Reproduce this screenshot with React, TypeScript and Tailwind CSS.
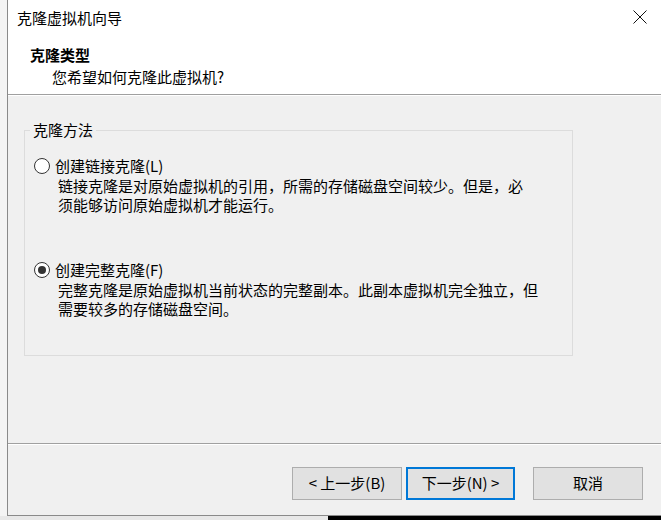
import React from 'react';

const font = { fontFamily: '"Noto Sans CJK SC", "Noto Sans", sans-serif' };

function Radio({ checked }: { checked: boolean }) {
  return (
    <span className="flex h-[16px] w-[16px] shrink-0 items-center justify-center rounded-full border border-[#333333] bg-white">
      {checked && <span className="h-[8px] w-[8px] rounded-full bg-[#333333]" />}
    </span>
  );
}

function Option({ label, lines, checked, className }: { label: string; lines: string[]; checked: boolean; className?: string }) {
  return (
    <div className={className}>
      <div className="flex items-center gap-[5px] pl-[9px] leading-[20px]">
        <Radio checked={checked} />
        <span>{label}</span>
      </div>
      <div className="pl-[33px] leading-[19px]">
        {lines.map((l) => (
          <div key={l}>{l}</div>
        ))}
      </div>
    </div>
  );
}

function WizardButton({ children, primary }: { children: React.ReactNode; primary?: boolean }) {
  return (
    <button
      className={
        primary
          ? 'h-[33px] w-[109px] border-2 border-[#0078d7] bg-[#e1e1e1] text-[15px] text-black'
          : 'h-[33px] w-[110px] border border-[#adadad] bg-[#e1e1e1] text-[15px] text-black'
      }
    >
      {children}
    </button>
  );
}

export default function App() {
  return (
    <div className="flex h-[520px] w-[661px] flex-col overflow-hidden bg-[#f4f4f4] text-[15px] text-black" style={font}>
      <div className="ml-[7px] flex h-[516px] flex-col border-b border-l border-[#8a8a8a]">
        {/* header */}
        <div className="h-[94px] bg-white">
          <div className="flex items-start justify-between pr-[14px]">
            <div className="pl-[9px] pt-[8px] leading-[20px]">克隆虚拟机向导</div>
            <svg width="14" height="14" viewBox="0 0 14 14" className="mt-[10px]">
              <path d="M0.5 0.5 L13.5 13.5 M13.5 0.5 L0.5 13.5" stroke="#111" strokeWidth="1" fill="none" />
            </svg>
          </div>
          <div className="pl-[22px] pt-[17px] font-bold leading-[20px]">克隆类型</div>
          <div className="pl-[44px] pt-[2px] leading-[20px]">您希望如何克隆此虚拟机?</div>
        </div>
        <div className="h-[1px] bg-[#a0a0a0]" />
        <div className="h-[1px] bg-white" />

        {/* body */}
        <div className="h-[347px] bg-[#f0f0f0] pt-[24px]">
          <fieldset className="ml-[16px] w-[549px] border border-[#dcdcdc] pb-[37px]">
            <legend className="ml-[5px] px-[3px] leading-[20px]">克隆方法</legend>
            <Option
              className="mt-[16px]"
              checked={false}
              label="创建链接克隆(L)"
              lines={['链接克隆是对原始虚拟机的引用，所需的存储磁盘空间较少。但是，必', '须能够访问原始虚拟机才能运行。']}
            />
            <Option
              className="mt-[46px]"
              checked={true}
              label="创建完整克隆(F)"
              lines={['完整克隆是原始虚拟机当前状态的完整副本。此副本虚拟机完全独立，但', '需要较多的存储磁盘空间。']}
            />
          </fieldset>
        </div>

        {/* footer */}
        <div className="h-[1px] bg-[#a0a0a0]" />
        <div className="h-[1px] bg-white" />
        <div className="flex flex-1 items-start bg-[#f0f0f0] pl-[284px] pt-[22px]">
          <WizardButton>&lt; 上一步(B)</WizardButton>
          <div className="w-[4px]" />
          <WizardButton primary>下一步(N) &gt;</WizardButton>
          <div className="w-[18px]" />
          <WizardButton>取消</WizardButton>
        </div>
      </div>
      <div className="flex flex-1">
        <div className="w-[328px] bg-[#e8e8e8]" />
        <div className="flex-1 bg-black" />
      </div>
    </div>
  );
}
